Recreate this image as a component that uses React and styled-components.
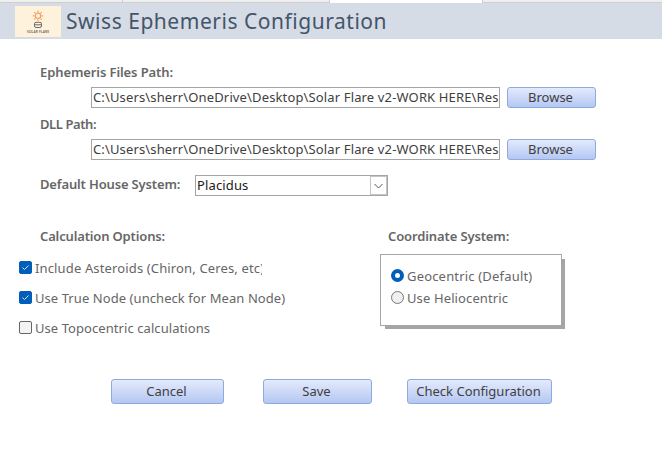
import React, { useState } from "react";
import styled, { createGlobalStyle } from "styled-components";

const Global = createGlobalStyle`
  * { box-sizing: border-box; }
  body {
    margin: 0;
    background: #fff;
    color: #666;
    font: 13px/20px "Noto Sans", "Open Sans", sans-serif;
    overflow: hidden;
  }
`;

const Page = styled.div`
  width: 662px;
  height: 456px;
  background: #fff;
  overflow: hidden;
  white-space: nowrap;
`;

const TabStrip = styled.div`
  display: flex;
  height: 3px;
`;

const Tab = styled.div`
  width: ${(p) => p.$width}px;
  background: ${(p) => (p.$active ? "#fff" : "#efefef")};
  border-bottom: ${(p) => (p.$active ? "none" : "1px solid #cfcfcf")};
  border-right: ${(p) => (p.$last ? "none" : "1px solid #cfcfcf")};
`;

const Header = styled.header`
  display: flex;
  align-items: center;
  height: 36px;
  padding-left: 15px;
  background: #d6dce5;
`;

const Title = styled.h1`
  margin: 0 0 0 5px;
  font-size: 21px;
  line-height: 30px;
  font-weight: 400;
  letter-spacing: 0.53px;
  color: #44546a;
`;

const Form = styled.main`
  padding-top: 23px;
`;

const Label = styled.div`
  height: 20px;
  font-weight: 600;
  letter-spacing: ${(p) => p.$track || 0}px;
  color: #666;
`;

const PathGroup = styled.section`
  height: 52px;
  padding-left: 40px;
`;

const PathRow = styled.div`
  display: flex;
  gap: 7px;
  margin: 5px 0 0 51px;
`;

const Field = styled.div`
  width: ${(p) => p.$width}px;
  height: 21px;
  padding-left: 1px;
  border: 1px solid #a5a5a5;
  line-height: 19px;
  letter-spacing: 0.14px;
  color: #404040;
  overflow: hidden;
`;

const Button = styled.button`
  width: ${(p) => p.$width}px;
  height: ${(p) => p.$height || 25}px;
  padding: 0 2px 0 0;
  border: 1px solid #8faadc;
  border-radius: 3px;
  background: linear-gradient(#e4eafb, #b4c7f3);
  color: #404040;
  font: inherit;
  line-height: 19px;
`;

const HouseRow = styled.div`
  display: flex;
  height: 21px;
  margin-top: 9px;
  padding-left: 40px;
`;

const HouseLabel = styled(Label)`
  width: 155px;
  line-height: 18px;
`;

const Select = styled(Field)`
  display: flex;
  justify-content: space-between;
  color: #202020;
`;

const SelectArrow = styled.span`
  display: flex;
  align-items: center;
  justify-content: center;
  width: 17px;
  height: 19px;
  border: 1px solid #c4c4c4;
`;

const Options = styled.section`
  display: flex;
  height: 153px;
  margin-top: 30px;
`;

const CalcColumn = styled.div`
  width: 380px;
  padding-left: 19px;
`;

const CalcLabel = styled(Label)`
  margin-left: 21px;
  margin-bottom: 12px;
`;

const CoordLabel = styled(Label)`
  margin-left: 8px;
  margin-bottom: 8px;
`;

const OptionRow = styled.div`
  display: flex;
  height: ${(p) => p.$height}px;
  cursor: default;
`;

const OptionText = styled.span`
  height: 20px;
  margin-left: 3px;
  width: ${(p) => (p.$clip ? `${p.$clip}px` : "auto")};
  overflow: ${(p) => (p.$clip ? "hidden" : "visible")};
  letter-spacing: ${(p) => p.$track ?? 0.07}px;
`;

const CheckBox = styled.span`
  display: flex;
  align-items: center;
  justify-content: center;
  width: 13px;
  height: 13px;
  margin-top: 3px;
  border: 1px solid ${(p) => (p.$on ? "#005fb8" : "#666")};
  border-radius: 2px;
  background: ${(p) => (p.$on ? "#005fb8" : "#f3f3f3")};
`;

const Radio = styled.span`
  width: 13px;
  height: 13px;
  margin-top: 3px;
  border: ${(p) => (p.$on ? "4px solid #005fb8" : "1px solid #777")};
  border-radius: 50%;
  background: ${(p) => (p.$on ? "#fff" : "#f0f0f0")};
`;

const CoordBox = styled.div`
  width: 182px;
  height: 72px;
  padding: 11px 0 0 10px;
  border: 1px solid #a5a5a5;
  box-shadow: 4px 4px 0 -1px #a5a5a5;
  background: #fff;
`;

const Actions = styled.footer`
  display: flex;
  padding-left: 111px;
`;

const ActionGap = styled.span`
  width: ${(p) => p.$width}px;
`;

const LogoSvg = styled.svg`
  display: block;
  width: 46px;
  height: 31px;
  background: #fff2dc;
`;

const Logo = () => (
  <LogoSvg viewBox="0 0 46 31">
    <g stroke="#f2a164" fill="none" strokeWidth="1.2">
      <circle cx="23" cy="9.8" r="2.7" />
      <path d="M23 4.6v1.8M23 13.2v1.8M17.8 9.8h1.8M26.4 9.8h1.8M19.3 6.1l1.2 1.2M25.5 12.3l1.2 1.2M26.7 6.1l-1.2 1.2M20.5 12.3l-1.2 1.2" />
    </g>
    <g stroke="#6b6862" fill="none" strokeWidth="1">
      <rect x="19.5" y="16.3" width="7" height="5.2" rx="1.6" />
      <path d="M19.5 18.8h7" />
    </g>
    <text x="12" y="26.6" fontSize="3.2" fontWeight="600" textLength="22" fill="#6b665f">SOLAR FLARE</text>
  </LogoSvg>
);

const PATH = "C:\\Users\\sherr\\OneDrive\\Desktop\\Solar Flare v2-WORK HERE\\Res";

const PathField = ({ label, track }) => (
  <PathGroup>
    <Label $track={track}>{label}</Label>
    <PathRow>
      <Field $width={409}>{PATH}</Field>
      <Button $width={89} $height={21}>Browse</Button>
    </PathRow>
  </PathGroup>
);

const Check = ({ label, initial, clip, track }) => {
  const [on, setOn] = useState(initial);
  return (
    <OptionRow $height={30} onClick={() => setOn(!on)}>
      <CheckBox $on={on}>
        {on && (
          <svg width="9" height="9" viewBox="0 0 9 9">
            <path d="M1.5 4.7l2 1.8 4-4" fill="none" stroke="#d7e8f8" />
          </svg>
        )}
      </CheckBox>
      <OptionText $clip={clip} $track={track}>{label}</OptionText>
    </OptionRow>
  );
};

export default function App() {
  const [geo, setGeo] = useState(true);
  return (
    <Page>
      <Global />
      <TabStrip>
        <Tab $width={123} />
        <Tab $width={207} />
        <Tab $width={153} $active />
        <Tab $width={179} $last />
      </TabStrip>
      <Header>
        <Logo />
        <Title>Swiss Ephemeris Configuration</Title>
      </Header>
      <Form>
        <PathField label="Ephemeris Files Path:" track={-0.1} />
        <PathField label="DLL Path:" track={-0.42} />
        <HouseRow>
          <HouseLabel $track={-0.15}>Default House System:</HouseLabel>
          <Select $width={193}>
            Placidus
            <SelectArrow>
              <svg width="9" height="6" viewBox="0 0 9 6">
                <path d="M.5 1l4 4 4-4" fill="none" stroke="#555" />
              </svg>
            </SelectArrow>
          </Select>
        </HouseRow>
        <Options>
          <CalcColumn>
            <CalcLabel $track={-0.15}>Calculation Options:</CalcLabel>
            <Check label="Include Asteroids (Chiron, Ceres, etc)" initial clip={227} track={0.14} />
            <Check label="Use True Node (uncheck for Mean Node)" initial />
            <Check label="Use Topocentric calculations" initial={false} />
          </CalcColumn>
          <div>
            <CoordLabel $track={-0.12}>Coordinate System:</CoordLabel>
            <CoordBox>
              <OptionRow $height={22} onClick={() => setGeo(true)}>
                <Radio $on={geo} />
                <OptionText $track={0.18}>Geocentric (Default)</OptionText>
              </OptionRow>
              <OptionRow $height={22} onClick={() => setGeo(false)}>
                <Radio $on={!geo} />
                <OptionText $track={0.12}>Use Heliocentric</OptionText>
              </OptionRow>
            </CoordBox>
          </div>
        </Options>
        <Actions>
          <Button $width={113}>Cancel</Button>
          <ActionGap $width={39} />
          <Button $width={109}>Save</Button>
          <ActionGap $width={35} />
          <Button $width={145}>Check Configuration</Button>
        </Actions>
      </Form>
    </Page>
  );
}
